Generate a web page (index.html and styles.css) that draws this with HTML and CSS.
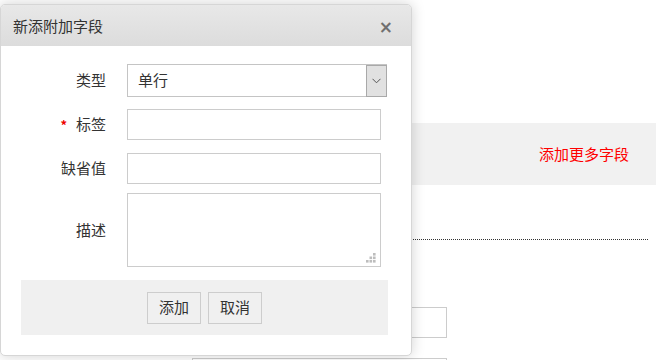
FILE: index.html
```html
<!DOCTYPE html>
<html>

<head>
    <meta charset="utf-8">
    <title>新添附加字段</title>
    <meta name="viewport" content="width=device-width, initial-scale=1.0">
    <link rel="stylesheet" href="styles.css">
</head>

<body>
    <div class="page">
        <div class="band">
            <a class="more" href="#">添加更多字段</a>
        </div>
        <div class="divider"></div>
        <div class="field-row">
            <input class="field" type="text">
        </div>
        <div class="field-row second">
            <input class="field" type="text">
        </div>
    </div>

    <div class="dialog">
        <div class="dialog-head">
            <span class="dialog-title">新添附加字段</span>
            <span class="close">&times;</span>
        </div>
        <div class="dialog-body">
            <div class="row row-type">
                <label class="label">类型</label>
                <div class="select">
                    <span class="select-text">单行</span>
                    <span class="select-arrow">
                        <svg width="9" height="6" viewBox="0 0 9 6">
                            <path d="M0.5 0.8 L4.5 4.8 L8.5 0.8" fill="none" stroke="#555" stroke-width="1"/>
                        </svg>
                    </span>
                </div>
            </div>
            <div class="row row-label">
                <label class="label"><span class="req">*</span>标签</label>
                <input class="input" type="text">
            </div>
            <div class="row row-default">
                <label class="label">缺省值</label>
                <input class="input" type="text">
            </div>
            <div class="row row-desc">
                <label class="label">描述</label>
                <div class="area-wrap">
                    <textarea class="area"></textarea>
                    <svg class="grip" width="11" height="11" viewBox="0 0 11 11">
                        <rect x="7" y="0" width="2.6" height="2.6" fill="#bdbdbd"/>
                        <rect x="3.5" y="3.5" width="2.6" height="2.6" fill="#bdbdbd"/>
                        <rect x="7" y="3.5" width="2.6" height="2.6" fill="#bdbdbd"/>
                        <rect x="0" y="7" width="2.6" height="2.6" fill="#bdbdbd"/>
                        <rect x="3.5" y="7" width="2.6" height="2.6" fill="#bdbdbd"/>
                        <rect x="7" y="7" width="2.6" height="2.6" fill="#bdbdbd"/>
                    </svg>
                </div>
            </div>
            <div class="dialog-foot">
                <button class="btn">添加</button>
                <button class="btn">取消</button>
            </div>
        </div>
    </div>
</body>

</html>
```
FILE: styles.css
```css
html,
body {
    margin: 0;
    padding: 0;
    height: 100%;
    overflow: hidden;
    background: #fff;
    font-family: "Noto Sans CJK SC", "Microsoft YaHei", sans-serif;
    font-size: 15px;
    color: #333;
}

* {
    box-sizing: border-box;
}

/* page behind the dialog */
.page {
    padding-top: 123px;
}

.band {
    height: 62px;
    background-color: #f1f1f1;
    display: flex;
    align-items: center;
    justify-content: flex-end;
    padding-right: 27px;
}

.more {
    color: #ff0000;
    text-decoration: none;
    font-size: 15px;
    margin-top: -2px;
}

.divider {
    margin-top: 54px;
    margin-right: 8px;
    border-top: 1px dotted #333;
}

.field-row {
    margin-top: 67px;
    padding-left: 192px;
}

.field-row.second {
    margin-top: 20px;
}

.field {
    display: block;
    width: 255px;
    height: 31px;
    border: 1px solid #ccc;
    background: #fff;
}

/* dialog */
.dialog {
    position: absolute;
    left: 0;
    top: 4px;
    width: 412px;
    height: 352px;
    background: #fff;
    border: 1px solid #d6d6d6;
    border-radius: 5px;
    box-shadow: 0 0 14px rgba(0, 0, 0, 0.18);
    overflow: hidden;
}

.dialog-head {
    height: 41px;
    display: flex;
    align-items: center;
    justify-content: space-between;
    padding: 0 18px 0 12px;
    background: linear-gradient(#e8e8e8, #dcdcdc);
}

.dialog-title {
    font-size: 15px;
    color: #333;
    margin-top: -1px;
}

.close {
    font-family: "DejaVu Sans", sans-serif;
    font-size: 17px;
    font-weight: bold;
    color: #707070;
    line-height: 1;
    margin-top: 4px;
}

.dialog-body {
    padding: 18px 23px 0 20px;
}

.row {
    display: flex;
    align-items: center;
}

.row-label {
    margin-top: 12px;
}

.row-default {
    margin-top: 13px;
}

.row-desc {
    margin-top: 9px;
}

.label {
    width: 85px;
    margin-right: 21px;
    text-align: right;
    color: #333;
    margin-left: -20px;
    padding-left: 20px;
    box-sizing: content-box;
    margin-top: -2px;
}

.req {
    color: #e00;
    font-size: 13px;
    margin-right: 9px;
    font-weight: bold;
}

.select {
    display: flex;
    width: 260px;
    height: 33px;
    border: 1px solid #c4c4c4;
    background: #fff;
}

.select-text {
    flex: 1;
    padding-left: 10px;
    line-height: 30px;
    color: #333;
}

.select-arrow {
    width: 21px;
    margin: 0 -1px -1px 0;
    background: #e1e1e1;
    border: 1px solid #a9a9a9;
    display: flex;
    align-items: center;
    justify-content: center;
}

.input {
    width: 254px;
    height: 31px;
    border: 1px solid #ccc;
    background: #fff;
    padding: 0 6px;
    font: inherit;
}

.area-wrap {
    position: relative;
    width: 254px;
    height: 74px;
}

.area {
    display: block;
    width: 100%;
    height: 100%;
    border: 1px solid #ccc;
    resize: none;
    font: inherit;
}

.grip {
    position: absolute;
    right: 4px;
    bottom: 3px;
}

.dialog-foot {
    margin-top: 13px;
    height: 55px;
    background: #f0f0f0;
    display: flex;
    align-items: center;
    justify-content: center;
    gap: 7px;
}

.btn {
    width: 54px;
    height: 32px;
    border: 1px solid #cdcdcd;
    background: #f0f0f0;
    font-family: inherit;
    font-size: 15px;
    color: #333;
    padding: 0 0 2px;
}
```
